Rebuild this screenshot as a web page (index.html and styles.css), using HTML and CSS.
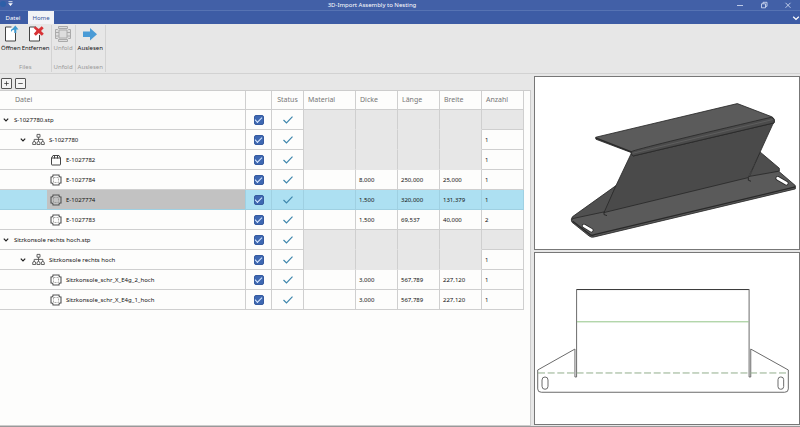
FILE: index.html
```html
<!DOCTYPE html>
<html lang="de">
<head>
<meta charset="utf-8">
<title>3D-Import Assembly to Nesting</title>
<link rel="stylesheet" href="styles.css">
</head>
<body>
<svg class="defs" aria-hidden="true">
  <symbol id="chevron" viewBox="0 0 8 8"><path d="M1.8 2.7 4 5l2.2-2.3" fill="none" stroke="#222" stroke-width="1.2"/></symbol>
  <symbol id="assembly" viewBox="0 0 13 13"><g fill="none" stroke="#555" stroke-width=".9"><path d="M5 1.4h3v2.8H5zM6.5 4.2v4.4M2.2 8.8V6.4h8.6v2.4"/><path d="M.7 11.5V10a1.5 1.5 0 0 1 3 0v1.5zM5 11.5V10a1.5 1.5 0 0 1 3 0v1.5zM9.3 11.5V10a1.5 1.5 0 0 1 3 0v1.5z"/></g></symbol>
  <symbol id="box" viewBox="0 0 12 12"><g fill="none" stroke="#444" stroke-width="1"><path d="M1.5 4h9v6.500q0 .5-.5.5H2q-.5 0-.5-.5zM1.500 4 3 1.500h6L10.500 4M4.500 1.500v3M7.500 1.500v3"/></g></symbol>
  <symbol id="sheet" viewBox="0 0 12 12"><path d="M3 1h6v1l1 1h1v6h-1l-1 1v1H3v-1L2 9H1V3h1l1-1z" fill="none" stroke="#555" stroke-width="1.100"/><path d="M3.500 3.500h5v5h-5z" fill="none" stroke="#888" stroke-width=".7" stroke-dasharray="2 1"/></symbol>
  <symbol id="tick" viewBox="0 0 12 10"><path d="m1.500 5 3 3 6-6.300" fill="none" stroke="#3f87ad" stroke-width="1.200"/></symbol>
</svg>

<div class="app">
  <header class="titlebar">
    <svg class="quick" viewBox="0 0 16 10" aria-hidden="true"><circle cx="3" cy="4" r="3" fill="#2d5fa8"/><path d="M8.500 1.700h4" stroke="#fff" stroke-width=".8"/><path d="M8.200 3.200h4.600L10.500 6z" fill="#fff"/></svg>
    <h1>3D-Import Assembly to Nesting</h1>
    <div class="window-buttons">
      <button aria-label="Minimieren"><svg viewBox="0 0 8 8"><path d="M1 4.500h6"/></svg></button>
      <button aria-label="Wiederherstellen"><svg viewBox="0 0 8 8"><path d="M1.500 2.800h4v4h-4zM3 2.800V1.300h4v4H5.500"/></svg></button>
      <button aria-label="Schließen"><svg viewBox="0 0 8 8"><path d="m1.500 1.800 5 5m0-5-5 5"/></svg></button>
    </div>
  </header>

  <nav class="tabs">
    <button class="tab">Datei</button>
    <button class="tab active">Home</button>
    <button class="collapse" aria-label="Menüband reduzieren"><svg viewBox="0 0 8 8"><path d="M1.200 2.800 4 5.400l2.800-2.600"/></svg></button>
  </nav>

  <div class="ribbon">
    <section class="group">
      <div class="tools">
        <button class="tool"><svg viewBox="0 0 18 18"><path d="M9.500 2H3.500v14h10V8" fill="#fff" stroke="#444"/><path d="M9 7q-.5-3.500 2-3.500L10.500 3.800 13.300.5l3.200 4H14.300V8h-2V4.800Q10.500 4.500 9 7z" fill="#3d9ad0"/></svg>Öffnen</button>
        <button class="tool"><svg viewBox="0 0 18 18"><path d="M9 2H2.500v14h10V10" fill="#fff" stroke="#444"/><path d="m6.500 2.800 2.200-1.300 3 2.500 3-2.700 2 1.900-2.700 2.700 2.800 2.900-2 2-3-2.700-3 2.700-2-2 2.700-3z" fill="#d83336"/></svg>Entfernen</button>
      </div>
      <h2>Files</h2>
    </section>
    <section class="group">
      <div class="tools">
        <button class="tool" disabled><svg viewBox="0 0 18 18"><g fill="#ddd" stroke="#aaa"><path d="M4.500 1.500h9v2l1 1h2v9h-2l-1 1v2h-9v-2l-1-1h-2v-9h2l1-1z"/><path d="M5 5h8v8H5zM1.500 7.500H5M13 7.500h3.500M1.500 11H5m8 0h3.500M5 3.500h8M5 14.500h8" fill="none"/></g></svg>Unfold</button>
      </div>
      <h2>Unfold</h2>
    </section>
    <section class="group">
      <div class="tools">
        <button class="tool"><svg viewBox="0 0 18 18"><path d="M2 6.500h7V3l7 6.200-7 6.200V12H2z" fill="#4a9bd6"/></svg>Auslesen</button>
      </div>
      <h2>Auslesen</h2>
    </section>
  </div>

  <main class="workspace">
    <div class="list">
      <div class="tree-tools">
        <button aria-label="Alle aufklappen"><svg viewBox="0 0 12 12"><path d="M3 6h6M6 3v6"/></svg></button>
        <button aria-label="Alle zuklappen"><svg viewBox="0 0 12 12"><path d="M3 6h6"/></svg></button>
      </div>
      <div class="sheet">
        <table>
          <colgroup><col><col class="c-check"><col class="c-status"><col class="c-material"><col class="c-num"><col class="c-num"><col class="c-num"><col class="c-num"></colgroup>
          <thead>
            <tr><th class="file">Datei</th><th></th><th class="mid">Status</th><th>Material</th><th>Dicke</th><th>Länge</th><th>Breite</th><th>Anzahl</th></tr>
          </thead>
          <tbody>
            <tr class="root">
              <td><div class="node"><svg class="chev"><use href="#chevron"/></svg><label for="r0">S-1027780.stp</label></div></td>
              <td class="mid"><input type="checkbox" id="r0" checked></td><td class="mid"><svg class="tick"><use href="#tick"/></svg></td>
              <td class="na"></td><td class="na"></td><td class="na"></td><td class="na"></td><td class="na"></td>
            </tr>
            <tr>
              <td><div class="node l1"><svg class="chev"><use href="#chevron"/></svg><svg class="asm"><use href="#assembly"/></svg><label for="r1">S-1027780</label></div></td>
              <td class="mid"><input type="checkbox" id="r1" checked></td><td class="mid"><svg class="tick"><use href="#tick"/></svg></td>
              <td class="na"></td><td class="na"></td><td class="na"></td><td class="na"></td><td>1</td>
            </tr>
            <tr>
              <td><div class="node l2"><svg class="part"><use href="#box"/></svg><label for="r2">E-1027782</label></div></td>
              <td class="mid"><input type="checkbox" id="r2" checked></td><td class="mid"><svg class="tick"><use href="#tick"/></svg></td>
              <td class="na"></td><td class="na"></td><td class="na"></td><td class="na"></td><td>1</td>
            </tr>
            <tr>
              <td><div class="node l2"><svg class="part"><use href="#sheet"/></svg><label for="r3">E-1027784</label></div></td>
              <td class="mid"><input type="checkbox" id="r3" checked></td><td class="mid"><svg class="tick"><use href="#tick"/></svg></td>
              <td></td><td>8,000</td><td>250,000</td><td>25,000</td><td>1</td>
            </tr>
            <tr class="selected">
              <td><div class="node l2"><svg class="part"><use href="#sheet"/></svg><label for="r4">E-1027774</label></div></td>
              <td class="mid"><input type="checkbox" id="r4" checked></td><td class="mid"><svg class="tick"><use href="#tick"/></svg></td>
              <td></td><td>1,500</td><td>320,000</td><td>131,379</td><td>1</td>
            </tr>
            <tr>
              <td><div class="node l2"><svg class="part"><use href="#sheet"/></svg><label for="r5">E-1027783</label></div></td>
              <td class="mid"><input type="checkbox" id="r5" checked></td><td class="mid"><svg class="tick"><use href="#tick"/></svg></td>
              <td></td><td>1,500</td><td>69,537</td><td>40,000</td><td>2</td>
            </tr>
            <tr class="root">
              <td><div class="node"><svg class="chev"><use href="#chevron"/></svg><label for="r6">Sitzkonsole rechts hoch.stp</label></div></td>
              <td class="mid"><input type="checkbox" id="r6" checked></td><td class="mid"><svg class="tick"><use href="#tick"/></svg></td>
              <td class="na"></td><td class="na"></td><td class="na"></td><td class="na"></td><td class="na"></td>
            </tr>
            <tr>
              <td><div class="node l1"><svg class="chev"><use href="#chevron"/></svg><svg class="asm"><use href="#assembly"/></svg><label for="r7">Sitzkonsole rechts hoch</label></div></td>
              <td class="mid"><input type="checkbox" id="r7" checked></td><td class="mid"><svg class="tick"><use href="#tick"/></svg></td>
              <td class="na"></td><td class="na"></td><td class="na"></td><td class="na"></td><td>1</td>
            </tr>
            <tr>
              <td><div class="node l2"><svg class="part"><use href="#sheet"/></svg><label for="r8">Sitzkonsole_schr_X_E4g_2_hoch</label></div></td>
              <td class="mid"><input type="checkbox" id="r8" checked></td><td class="mid"><svg class="tick"><use href="#tick"/></svg></td>
              <td></td><td>3,000</td><td>567,789</td><td>227,120</td><td>1</td>
            </tr>
            <tr>
              <td><div class="node l2"><svg class="part"><use href="#sheet"/></svg><label for="r9">Sitzkonsole_schr_X_E4g_1_hoch</label></div></td>
              <td class="mid"><input type="checkbox" id="r9" checked></td><td class="mid"><svg class="tick"><use href="#tick"/></svg></td>
              <td></td><td>3,000</td><td>567,789</td><td>227,120</td><td>1</td>
            </tr>
          </tbody>
        </table>
      </div>
    </div>

    <div class="views">
      <div class="view">
        <svg viewBox="15 6 792 513" role="img" aria-label="3D-Ansicht">
          <g stroke="#292929" stroke-width="2.500" stroke-linejoin="round">
            <path d="M690 230 748 279V288L655 312z" fill="#4e4e4e"/>
            <path d="M258 331 128 424Q120 432 128 440L225 412z" fill="#505050"/>
            <path d="M128 430 222 410 655 304 746 288 796 331V341L193 485Q184 488 177 482L126 441Q122 435 128 430z" fill="#5a5a5a"/>
            <path d="M304 234 732 139 690 231 655 307 222 412 258 331z" fill="#4a4a4a"/>
            <path d="M197 186 622 85 724 124Q736 129 732 143L310 242Q302 240 304 232L198 192z" fill="#5b5b5b"/>
            <path d="M304 229Q330 218 724 126Q736 130 732 143L310 242Q301 239 304 229z" fill="#4b4b4b"/>
            <path d="M308 234 728 133" fill="none" stroke="#626262"/>
            <path d="M197 188 304 230M128 438 180 478Q186 482 193 478L796 335" fill="none" stroke-width="4"/>
            <path d="M222 410V418L231 421M655 307V315L663 318" fill="none" stroke-width="3"/>
          </g>
          <g fill="none" stroke-linecap="round">
            <path d="M162 452 184 465M743 309 769 324" stroke="#292929" stroke-width="13"/>
            <path d="M162 452 184 465M743 309 769 324" stroke="#fff" stroke-width="8"/>
          </g>
        </svg>
      </div>
      <div class="view">
        <svg viewBox="15 21 792 516" role="img" aria-label="Abwicklung">
          <g fill="none" stroke="#6a6a6a" stroke-width="3">
            <path d="M139 131H658" stroke="#333"/>
            <path d="M139 130V394H134V310L22 373V430Q22 440 33 440H765Q776 440 776 430V373L663 310V394H658V130"/>
            <rect x="35" y="394" width="18" height="37" rx="9"/>
            <rect x="745" y="394" width="17" height="37" rx="8"/>
          </g>
          <path d="M140 228H657" stroke="#93c487" stroke-width="3"/>
          <path d="M23 382H775" stroke="#91ad8b" stroke-width="3" stroke-dasharray="21 8"/>
        </svg>
      </div>
    </div>
  </main>
</div>
</body>
</html>
```

FILE: styles.css
```css
* { box-sizing: border-box; }

body {
  margin: 0;
  font: 6px/10px "Noto Sans", "Open Sans", sans-serif;
  color: #111;
  background: #e7e7e7;
}

button {
  margin: 0;
  padding: 0;
  border: 0;
  background: none;
  font: inherit;
  color: inherit;
}

svg { display: block; }
.defs { display: none; }

h1, h2 { margin: 0; font: inherit; }

.app {
  display: flex;
  flex-direction: column;
  height: 100vh;
  border-bottom: 1px solid #999;
}

/* Title bar */
.titlebar {
  display: flex;
  align-items: center;
  height: 10px;
  background: #4260a7;
  color: #fff;
}
.titlebar h1 { flex: 1; text-align: center; }
.quick { width: 16px; height: 10px; }
.window-buttons { display: flex; }
.window-buttons button { display: grid; place-items: center; width: 24px; }
.window-buttons svg { width: 8px; height: 8px; fill: none; stroke: #dce5f8; stroke-width: .8; }

/* Tabs */
.tabs {
  display: flex;
  align-items: stretch;
  height: 14px;
  background: #3d5ca5;
  border-top: 1px solid #5673b3;
  color: #fff;
}
.tab { width: 28px; }
.tab:first-child { padding-right: 2px; }
.tab.active { width: 26px; background: #f2f3f6; color: #35549c; }
.collapse { margin-left: auto; }
.collapse svg { width: 8px; height: 8px; fill: none; stroke: #fff; stroke-width: 1.3; }

/* Ribbon */
.ribbon {
  display: flex;
  height: 50px;
  padding-top: 1px;
  border-bottom: 1px solid #d2d2d2;
}
.group {
  display: flex;
  flex-direction: column;
  justify-content: space-between;
  margin-bottom: 1px;
  padding: 0 1px;
  border-right: 1px solid #d3d3d3;
}
.group + .group { padding: 0 2px; }
.tools { display: flex; justify-content: center; gap: 1px; }
.tool { display: flex; flex-direction: column; align-items: center; }
.tool svg { width: 18px; height: 18px; }
.tool:disabled { color: #999; }
.group h2 { text-align: center; color: #999; }

/* Workspace */
.workspace {
  flex: 1;
  display: grid;
  grid-template-columns: 1fr 33.25%;
  min-height: 0;
}
.list { display: flex; flex-direction: column; min-width: 0; }
.tree-tools { display: flex; gap: 3px; padding: 4px 1px 1px; }
.tree-tools button {
  width: 11px;
  height: 11px;
  border: 1px solid #555;
  border-radius: 1px;
  background: #f4f4f4;
}
.tree-tools svg { width: 9px; height: 9px; stroke: #333; }

.sheet {
  flex: 1;
  margin-right: 3px;
  padding-right: 6px;
  border: 1px solid #ccc;
  border-left: 0;
  background: #fdfdfc;
}

table {
  width: 100%;
  table-layout: fixed;
  border-collapse: separate;
  border-spacing: 0;
}
.c-check { width: 26px; }
.c-status { width: 32px; }
.c-material { width: 52px; }
.c-num { width: 42px; }

th, td {
  height: 20px;
  padding: 0 3px;
  border-right: 1px solid #cfcfcf;
  border-bottom: 1px solid #cfcfcf;
  text-align: left;
  white-space: nowrap;
}
th { height: 19px; padding: 0 4px; font-size: 7px; font-weight: normal; color: #777; }
th.file { padding-left: 15px; }
td:first-child { padding: 0; }
th.mid, td.mid { padding: 0; text-align: center; }
.na { background: #e7e7e7; border-bottom-color: #e7e7e7; }
.na:last-child { border-bottom-color: #cfcfcf; }

.node { display: flex; align-items: center; height: 19px; padding-left: 2px; }
.l1 { padding-left: 19px; }
.l2 { margin-left: 47px; padding-left: 3px; }
.chev { width: 8px; height: 8px; margin-right: 4px; }
.l1 .chev { margin-right: 5px; }
.asm { width: 13px; height: 13px; margin-right: 4px; }
.part { width: 12px; height: 12px; margin-right: 4px; }
.tick { width: 12px; height: 10px; margin: 0 auto; }

.selected td { background: #ade0f2; border-color: #9fd0e2; }
.selected .node { background: #c2c2c2; }

input[type="checkbox"] {
  appearance: none;
  display: grid;
  place-items: center;
  width: 10px;
  height: 10px;
  margin: 0 auto;
  border: 1px solid #365b9f;
  border-radius: 2px;
  background: #3e68b2;
}
input[type="checkbox"]:checked::after {
  content: "";
  width: 6px;
  height: 3px;
  margin-bottom: 2px;
  border: solid #d8e8ff;
  border-width: 0 0 1px 1px;
  transform: rotate(-45deg);
}

/* Model views */
.views {
  display: grid;
  grid-template-rows: 1fr 1fr;
  gap: 2px;
  min-height: 0;
  padding: 2px 0 1px;
}
.view { min-height: 0; border: 1px solid #777; background: #fff; }
.view svg { width: 100%; height: 100%; }
```
